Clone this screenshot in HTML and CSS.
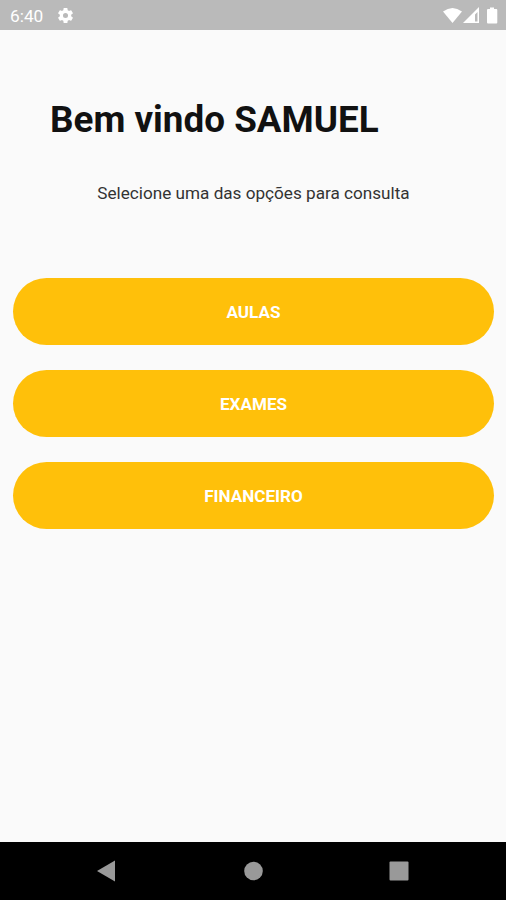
FILE: index.html
```html
<!DOCTYPE html>
<html lang="pt-BR">
<head>
<meta charset="utf-8">
<title>Bem vindo</title>
<link rel="stylesheet" href="styles.css">
</head>
<body>
<header class="status">
  <span class="time">6:40</span>
  <svg class="gear" viewBox="0 0 24 24"><path d="M19.14 12.94c.04-.3.06-.61.06-.94s-.02-.64-.07-.94l2.03-1.58a.49.49 0 0 0 .12-.61l-1.92-3.32a.49.49 0 0 0-.59-.22l-2.39.96a7 7 0 0 0-1.62-.94l-.36-2.54a.48.48 0 0 0-.48-.41h-3.84a.47.47 0 0 0-.47.41l-.36 2.54c-.59.24-1.13.57-1.62.94l-2.39-.96a.48.48 0 0 0-.59.22L2.74 8.87a.47.47 0 0 0 .12.61l2.03 1.58a6 6 0 0 0 0 1.88l-2.03 1.58a.49.49 0 0 0-.12.61l1.92 3.32c.12.22.37.29.59.22l2.39-.96c.5.38 1.03.7 1.62.94l.36 2.54c.05.24.24.41.48.41h3.84c.24 0 .44-.17.47-.41l.36-2.54a7 7 0 0 0 1.62-.94l2.39.96c.22.08.47 0 .59-.22l1.92-3.32a.47.47 0 0 0-.12-.61zM12 15.2A3.2 3.2 0 1 1 12 8.8a3.2 3.2 0 0 1 0 6.4z"/></svg>
  <svg class="signals" viewBox="0 0 56 18"><path d="M0 4.500Q9.500-2.500 19 4.500L9.500 16Z"/><path fill-rule="evenodd" d="M36 0V16H20ZM34.500 5V14.500H32V7.500Z"/><path d="M45 2H47V.5h4V2H53.300q1 0 1 1V15.500q0 1-1 1H45q-1 0-1-1V3q0-1 1-1Z"/></svg>
</header>
<main class="content">
  <h1 class="title">Bem vindo SAMUEL</h1>
  <p class="hint">Selecione uma das opções para consulta</p>
  <div class="actions">
    <button class="action">AULAS</button>
    <button class="action">EXAMES</button>
    <button class="action">FINANCEIRO</button>
  </div>
</main>
<nav class="navbar">
  <svg class="nav-icon" viewBox="0 0 20 22"><path d="M18 .5V21.500L0 11Z"/></svg>
  <svg class="nav-icon" viewBox="0 0 20 22"><circle cx="10.500" cy="11" r="9.300"/></svg>
  <svg class="nav-icon" viewBox="0 0 20 22"><rect x=".5" y="1.500" width="19" height="19" rx="1"/></svg>
</nav>
</body>
</html>
```
FILE: styles.css
```css
* { box-sizing: border-box; }
body { margin: 0; height: 900px; display: flex; flex-direction: column; background: #fafafa; font-family: Roboto, sans-serif; overflow: hidden; }
.status { height: 30px; background: #bababa; color: #fff; display: flex; align-items: center; padding: 1px 7px 0 10px; fill: #fff; }
.time { font-size: 17.300px; line-height: 28px; }
.gear { width: 19px; height: 19px; margin-left: 13px; }
.signals { width: 56px; height: 18px; margin-left: auto; }
.content { flex: 1; padding: 66px 12px 0 13px; }
.title { margin: 0 0 0 37px; font-size: 36.850px; line-height: 48px; font-weight: 700; color: #111; white-space: nowrap; }
.hint { margin: 37px 0 0; font-size: 17.150px; line-height: 24px; text-align: center; color: #333; white-space: nowrap; }
.actions { display: flex; flex-direction: column; gap: 25px; margin-top: 72.500px; }
.action { height: 67.200px; border: 0; padding: 1px 0 0; border-radius: 34px; background: #ffc00a; color: #fff; font: 700 17.100px/20px Roboto, sans-serif; }
.navbar { height: 58px; background: #000; display: flex; justify-content: space-between; align-items: center; padding: 0 97px; }
.nav-icon { width: 20px; height: 22px; fill: #999; }
```
